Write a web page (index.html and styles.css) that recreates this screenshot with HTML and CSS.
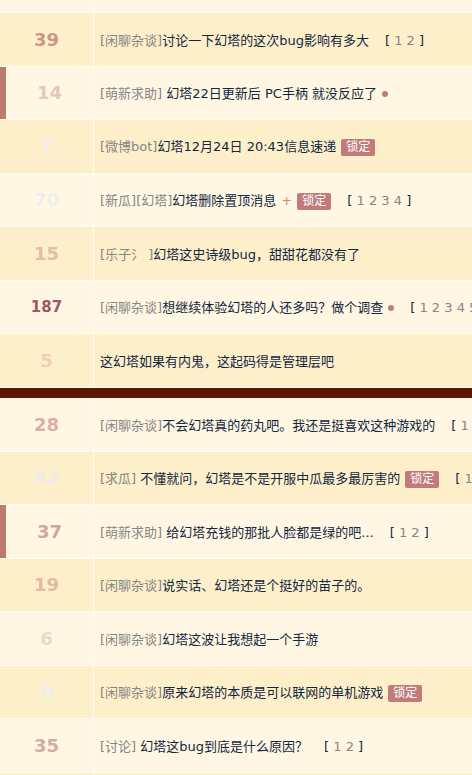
FILE: index.html
```html
<!DOCTYPE html>
<html lang="zh-CN">
<head>
<meta charset="utf-8">
<title>帖子列表</title>
<link rel="stylesheet" href="styles.css">
</head>
<body>
<div class="list">
  <div class="row light top"><div class="num"></div><div class="title"></div></div>

  <div class="row dark"><div class="num h39">39</div><div class="title"><span class="txt"><span class="cat">[闲聊杂谈]</span>讨论一下幻塔的这次bug影响有多大<span class="pager">[ <span class="pg">1</span> <span class="pg">2</span> ]</span></span></div></div>
  <div class="row light mark"><div class="num h14">14</div><div class="title"><span class="txt"><span class="cat">[萌新求助]</span> 幻塔22日更新后 PC手柄 就没反应了<span class="dot"></span></span></div></div>
  <div class="row dark"><div class="num h7">7</div><div class="title"><span class="txt"><span class="cat">[微博bot]</span>幻塔12月24日 20:43信息速递<span class="lock">锁定</span></span></div></div>
  <div class="row light"><div class="num h70">70</div><div class="title"><span class="txt"><span class="cat">[新瓜][幻塔]</span>幻塔删除置顶消息<span class="plus">+</span><span class="lock">锁定</span><span class="pager">[ <span class="pg">1</span> <span class="pg">2</span> <span class="pg">3</span> <span class="pg">4</span> ]</span></span></div></div>
  <div class="row dark"><div class="num h15">15</div><div class="title"><span class="txt"><span class="cat">[乐子氵 ]</span>幻塔这史诗级bug，甜甜花都没有了</span></div></div>
  <div class="row light"><div class="num h187">187</div><div class="title"><span class="txt"><span class="cat">[闲聊杂谈]</span>想继续体验幻塔的人还多吗？做个调查<span class="dot"></span><span class="pager">[ <span class="pg">1</span> <span class="pg">2</span> <span class="pg">3</span> <span class="pg">4</span> <span class="pg">5</span> ]</span></span></div></div>
  <div class="row dark"><div class="num h5">5</div><div class="title"><span class="txt">这幻塔如果有内鬼，这起码得是管理层吧</span></div></div>

  <div class="divider"></div>

  <div class="row light"><div class="num h28">28</div><div class="title"><span class="txt"><span class="cat">[闲聊杂谈]</span>不会幻塔真的药丸吧。我还是挺喜欢这种游戏的<span class="pager">[ <span class="pg">1</span> <span class="pg">2</span> ]</span></span></div></div>
  <div class="row dark"><div class="num h52">52</div><div class="title"><span class="txt"><span class="cat">[求瓜]</span> 不懂就问，幻塔是不是开服中瓜最多最厉害的<span class="lock">锁定</span><span class="pager">[ <span class="pg">1</span> <span class="pg">2</span> ]</span></span></div></div>
  <div class="row light mark"><div class="num h37">37</div><div class="title"><span class="txt"><span class="cat">[萌新求助]</span> 给幻塔充钱的那批人脸都是绿的吧...<span class="pager">[ <span class="pg">1</span> <span class="pg">2</span> ]</span></span></div></div>
  <div class="row dark"><div class="num h19">19</div><div class="title"><span class="txt"><span class="cat">[闲聊杂谈]</span>说实话、幻塔还是个挺好的苗子的。</span></div></div>
  <div class="row light"><div class="num h6">6</div><div class="title"><span class="txt"><span class="cat">[闲聊杂谈]</span>幻塔这波让我想起一个手游</span></div></div>
  <div class="row dark"><div class="num h0">0</div><div class="title"><span class="txt"><span class="cat">[闲聊杂谈]</span>原来幻塔的本质是可以联网的单机游戏<span class="lock">锁定</span></span></div></div>
  <div class="row light"><div class="num h35">35</div><div class="title"><span class="txt"><span class="cat">[讨论]</span> 幻塔这bug到底是什么原因？<span class="pager">[ <span class="pg">1</span> <span class="pg">2</span> ]</span></span></div></div>
  <div class="row dark"><div class="num"></div><div class="title"></div></div>
</div>
</body>
</html>
```
FILE: styles.css
```css
html, body {
  margin: 0;
  padding: 0;
  background: #fff8e6;
  overflow: hidden;
}
.list {
  width: 472px;
  height: 775px;
  overflow: hidden;
  font-family: "DejaVu Sans", "Noto Sans CJK SC", sans-serif;
  font-size: 13px;
  color: #10273f;
}
.row {
  display: flex;
  height: 52.5px;
  border-bottom: 1px solid #fffcf4;
  white-space: nowrap;
}
.row.top { height: 12px; }
.light { background: #fff7e3; }
.dark { background: #feefcb; }
.num {
  box-sizing: border-box;
  flex: 0 0 94px;
  width: 94px;
  border-right: 1px solid #fffcf4;
  display: flex;
  align-items: center;
  justify-content: center;
  font-family: "DejaVu Sans", sans-serif;
  font-weight: bold;
  font-size: 18px;
}
.mark .num { border-left: 6px solid #bd7b6e; }
.title {
  flex: 1 1 auto;
  min-width: 0;
  display: flex;
  align-items: center;
  padding-left: 6px;
  overflow: hidden;
}
.txt {
  flex: 0 0 auto;
  white-space: pre;
}
.cat { color: #858585; }
.pager { margin-left: 16px; color: #10273f; }
.pg { color: #858585; }
.dot {
  display: inline-block;
  width: 6px;
  height: 6px;
  border-radius: 50%;
  background: #c1806e;
  margin-left: 5px;
  vertical-align: 1px;
}
.plus { color: #c98f6f; margin-left: 5px; }
.lock {
  display: inline-block;
  margin-left: 5px;
  padding: 0 5px;
  height: 17px;
  line-height: 17px;
  font-size: 12px;
  color: #fff;
  background: #c17b7b;
  border-radius: 2px;
  vertical-align: 0;
}
.divider { height: 10.5px; background: #5a1804; }

.h39 { color: #d0958a; }
.h14 { color: #e6c8b8; }
.h7 { color: #efeeee; }
.h70 { color: #eeeef0; }
.h15 { color: #e4bca6; }
.h187 { color: #9a5868; font-size: 15px; }
.h5 { color: #efd0b5; }
.h28 { color: #d9b2a5; }
.h52 { color: #eeebe8; }
.h37 { color: #d0a79d; }
.h19 { color: #e2bba5; }
.h6 { color: #eed9c8; }
.h0 { color: #eeeeee; }
.h35 { color: #d5ac9f; }
```
